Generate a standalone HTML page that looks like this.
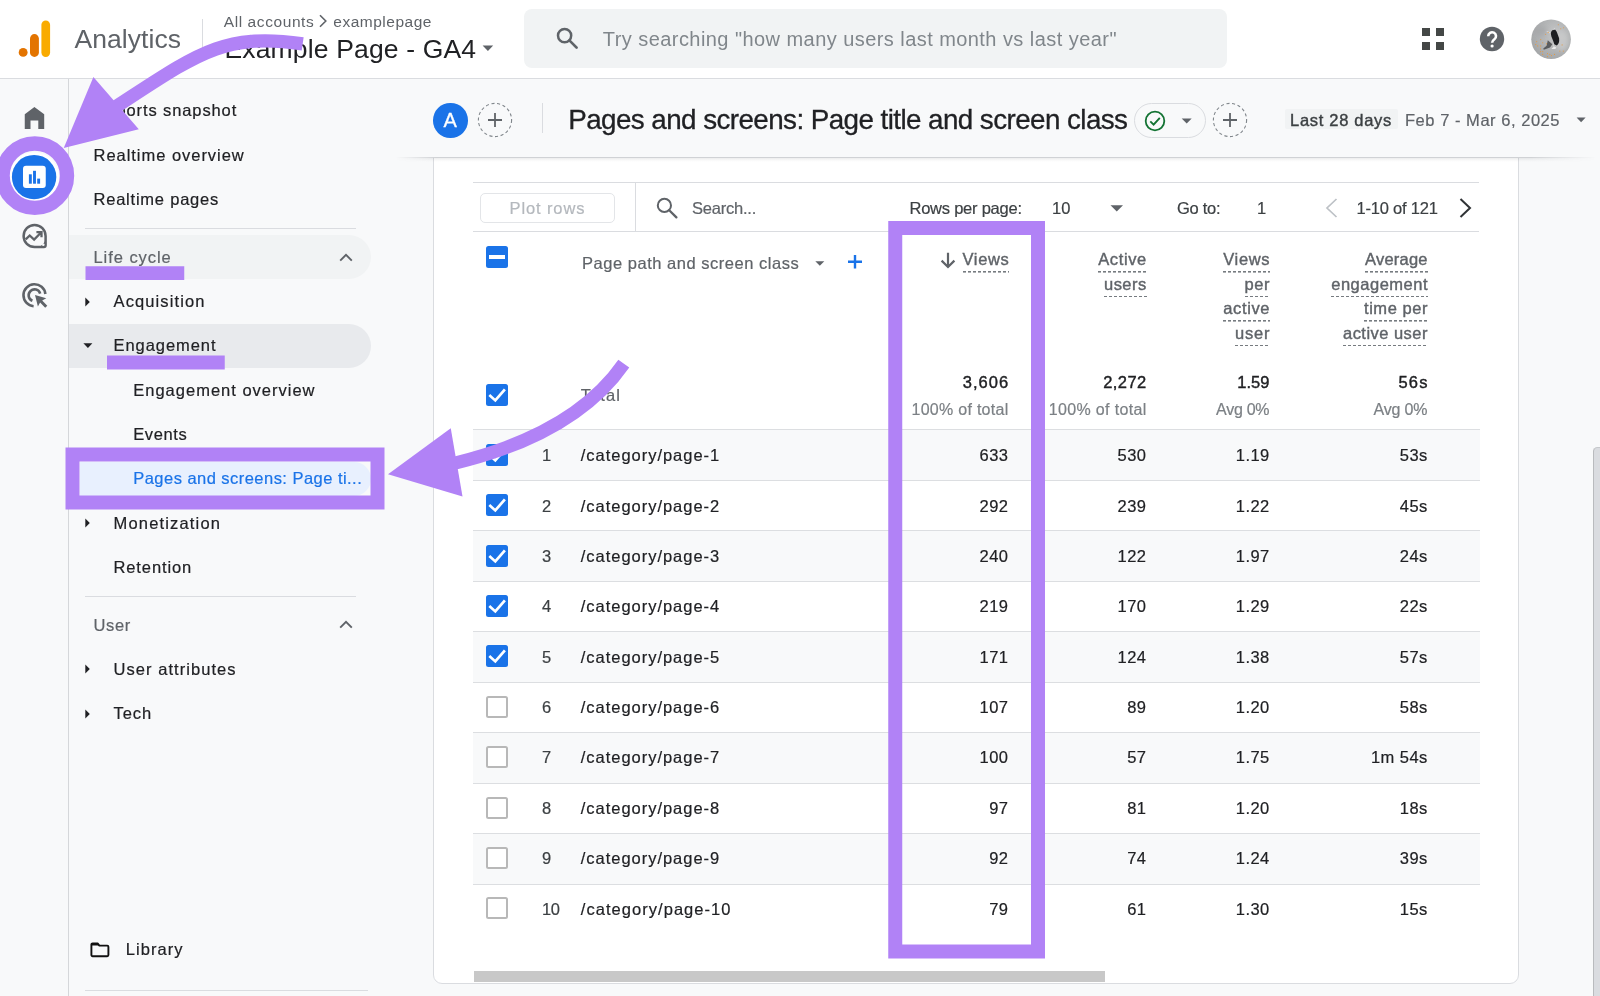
<!DOCTYPE html>
<html lang="en">
<head>
<meta charset="utf-8">
<title>Analytics - Pages and screens</title>
<style>
html,body{margin:0;padding:0}
body{width:1600px;height:996px;overflow:hidden;position:relative;background:#f8f9fa;font-family:"Liberation Sans",Arial,sans-serif;}
.abs,.t,.cb,.row,.ln{position:absolute}
.t{white-space:nowrap;line-height:1;font-family:"Liberation Sans",Arial,sans-serif;-webkit-text-stroke:0.2px currentColor}
.u{padding-bottom:5.1px;background:repeating-linear-gradient(90deg,#767b80 0,#767b80 3.3px,transparent 3.3px,transparent 5px) left bottom/100% 1.6px no-repeat}
.m{-webkit-text-stroke:0.4px currentColor}
.g{-webkit-text-stroke:0.3px currentColor}
.n{-webkit-text-stroke:0}
.layer{position:absolute;left:0;top:0;width:1600px;height:996px;will-change:transform}
svg{position:absolute;overflow:visible}
/* top bar */
#topbar{left:0;top:0;width:1600px;height:78px;background:#fff;border-bottom:1px solid #dadce0}
#searchbox{left:523.75px;top:8.75px;width:703px;height:59.25px;border-radius:8px;background:#f1f3f4}
/* rail + nav */
#rail{left:0;top:79px;width:68px;height:917px;background:#f8f9fa;border-right:1px solid #d5d7da}
#navpane{left:69px;top:79px;width:364px;height:917px;background:#f8f9fa}
.pill{left:69px;width:302px;height:44.3px;border-radius:0 22px 22px 0}
.ln{background:#dadce0;height:1px}
/* report header */
#rhead{left:400px;top:79px;width:1200px;height:78px;background:#f8f9fa}
#rheadline{left:396px;top:157px;width:1204px;height:5px;background:linear-gradient(to bottom,#d0d2d5 0,#d0d2d5 1px,rgba(60,64,67,.09) 1px,rgba(60,64,67,.04) 3px,rgba(60,64,67,0) 5px);-webkit-mask-image:linear-gradient(to right,transparent 0,#000 40px,#000 1135px,transparent 1200px);mask-image:linear-gradient(to right,transparent 0,#000 40px,#000 1135px,transparent 1200px)}
/* card */
#card{left:433px;top:150px;width:1085.5px;height:833.5px;box-sizing:border-box;background:#fff;border:1px solid #dadce0;border-radius:0 0 9px 9px}
.row{left:473px;width:1006.5px;height:50.5px;box-sizing:border-box;border-top:1px solid #dcdee1}
.cb{left:486.25px;width:22px;height:22px;box-sizing:border-box;border-radius:2.5px}
.cb.on{background:#1a73e8}
.cb svg{left:0;top:0}
.cb.off{border:2px solid #b8b8b8;background:#fff}
.cb.ind{background:#1a73e8}
.cb.ind::after{content:"";position:absolute;left:3px;top:9.25px;width:16.2px;height:3.25px;background:#fff}
</style>
</head>
<body>

<!-- ======================= TOP BAR ======================= -->
<header class="layer" id="top">
  <div class="abs" id="topbar"></div>
  <!-- GA logo -->
  <svg width="40" height="44" viewBox="16 18 40 44" style="left:16px;top:18px">
    <rect x="41.4" y="20.4" width="8.7" height="36.5" rx="4.35" fill="#f9ab00"/>
    <rect x="30" y="34.1" width="8.9" height="22.8" rx="4.45" fill="#e37400"/>
    <circle cx="23.15" cy="52.4" r="4.45" fill="#e37400"/>
  </svg>
  <div class="abs" style="left:202px;top:19px;width:1px;height:40px;background:#dadce0"></div>
  <!-- breadcrumb chevron -->
  <svg width="10" height="14" viewBox="0 0 10 14" style="left:318.4px;top:14.3px"><path d="M2 1.2 L7.8 7 L2 12.8" fill="none" stroke="#5f6368" stroke-width="1.6"/></svg>
  <!-- property dropdown triangle -->
  <svg width="12" height="8" viewBox="0 0 12 8" style="left:482.3px;top:45.3px"><path d="M0.6 0.4 H11.2 L5.9 5.9 Z" fill="#5f6368"/></svg>
  <div class="abs" id="searchbox"></div>
  <svg width="24" height="24" viewBox="0 0 24 24" style="left:554.7px;top:25.6px"><circle cx="9.6" cy="9.6" r="6.6" fill="none" stroke="#5f6368" stroke-width="2.5"/><path d="M14.4 14.4 L21.6 21.6" stroke="#5f6368" stroke-width="2.7" stroke-linecap="round"/></svg>
  <!-- apps grid -->
  <svg width="24" height="24" viewBox="0 0 24 24" style="left:1420.5px;top:27px">
    <rect x="1" y="1" width="8" height="8" fill="#444746"/><rect x="15" y="1" width="8" height="8" fill="#444746"/>
    <rect x="1" y="15" width="8" height="8" fill="#444746"/><rect x="15" y="15" width="8" height="8" fill="#444746"/>
  </svg>
  <!-- help -->
  <svg width="26" height="26" viewBox="0 0 26 26" style="left:1478.7px;top:26px">
    <circle cx="13" cy="13" r="12.2" fill="#5f6368"/>
    <path d="M9.2 10.2 a3.9 3.9 0 1 1 6.2 3.1 c-1.5 1.1 -2.3 1.7 -2.3 3.4" fill="none" stroke="#fff" stroke-width="2.6"/>
    <circle cx="13.1" cy="20" r="1.6" fill="#fff"/>
  </svg>
  <!-- avatar -->
  <svg width="40" height="40" viewBox="0 0 40 40" style="left:1530.7px;top:18.8px">
    <defs>
      <radialGradient id="av" cx="62%" cy="38%" r="70%"><stop offset="0" stop-color="#c6c7c8"/><stop offset="0.55" stop-color="#b3b5b6"/><stop offset="1" stop-color="#a3a5a7"/></radialGradient>
      <clipPath id="avc"><circle cx="20.1" cy="20.3" r="19.8"/></clipPath>
      <filter id="avb" x="-50%" y="-50%" width="200%" height="200%"><feGaussianBlur stdDeviation="2.2"/></filter>
    </defs>
    <circle cx="20.1" cy="20.3" r="19.8" fill="url(#av)"/>
    <g clip-path="url(#avc)">
      <ellipse cx="31" cy="22" rx="6" ry="10" fill="#c9cacb" opacity=".8" filter="url(#avb)"/>
      <ellipse cx="9" cy="12" rx="7" ry="5" fill="#a4a6a8" opacity=".7" filter="url(#avb)"/>
      <path d="M16.800 21.300 L21.300 25.300 L19 28.500 L12.800 30.800 L12.300 29.600 L15.600 26.800 Z" fill="#4a4c4f" opacity=".85"/>
      <path d="M21.300 11.300 L24.300 10.800 Q25.800 12.300 26.300 14.300 L28.100 19.300 Q28.400 21.800 27.800 23.800 Q27.200 25.700 25.800 26.400 L23.300 25.300 L22.300 22.300 L20.300 17.300 L19.800 14.300 Q20.200 12.300 21.300 11.300 Z" fill="#1c1e21"/>
      <path d="M22.300 23.300 L23.300 27.400 L25.300 28.400 L24.300 29.900 L20.300 29.900 L22.600 27.800 Z" fill="#e9eaea"/>
      <path d="M15.300 12.300 L17.800 12.800 L19.600 14.600 L17.300 13.700 Z M22.600 9.300 L24 9.200 L23.600 10 Z" fill="#eeeeee"/>
      <g fill="#e39a45"><circle cx="27.3" cy="5.8" r="0.55"/><circle cx="29.8" cy="9.8" r="0.55"/><circle cx="32.6" cy="8.8" r="0.55"/><circle cx="9.7" cy="20.6" r="0.55"/><circle cx="5.7" cy="22.6" r="0.55"/><circle cx="11.7" cy="23.8" r="0.55"/><circle cx="15.5" cy="24.8" r="0.55"/><circle cx="9.7" cy="26.9" r="0.55"/><circle cx="4.7" cy="25.6" r="0.55"/><circle cx="6.7" cy="26.9" r="0.55"/><circle cx="9.5" cy="29.9" r="0.55"/><circle cx="11.7" cy="32.6" r="0.55"/><circle cx="9.5" cy="32.6" r="0.55"/><circle cx="11.7" cy="35.4" r="0.55"/><circle cx="16.5" cy="34.6" r="0.55"/><circle cx="18.8" cy="35.4" r="0.55"/><circle cx="16.5" cy="37.6" r="0.55"/><circle cx="23.5" cy="35.4" r="0.55"/><circle cx="20.5" cy="36.6" r="0.55"/><circle cx="31.1" cy="25.9" r="0.55"/><circle cx="28.8" cy="32.1" r="0.55"/><circle cx="32.3" cy="32.1" r="0.55"/><circle cx="14.6" cy="15.3" r="0.55"/><circle cx="17.2" cy="13.4" r="0.55"/></g>
    </g>
  </svg>
<span class="t n" id="t0" style="top:25.57px;font-size:26.5px;color:#5f6368;left:74.50px;letter-spacing:0.057px;">Analytics</span>
<span class="t n" id="t1" style="top:13.63px;font-size:15.5px;color:#5f6368;left:223.75px;letter-spacing:0.584px;">All accounts</span>
<span class="t n" id="t2" style="top:13.63px;font-size:15.5px;color:#5f6368;left:333.25px;letter-spacing:0.517px;">examplepage</span>
<span class="t n" id="t3" style="top:35.57px;font-size:26.5px;color:#202124;left:224.50px;letter-spacing:0.151px;">Example Page - GA4</span>
<span class="t n" id="t4" style="top:28.82px;font-size:20px;color:#80868b;left:602.75px;letter-spacing:0.442px;">Try searching "how many users last month vs last year"</span>
</header>

<!-- ======================= LEFT RAIL ======================= -->
<aside class="layer" id="railwrap">
  <div class="abs" id="rail"></div>
  <!-- rail icons: home, reports (active), explore, advertising -->
  <svg width="68" height="260" viewBox="0 90 68 260" style="left:0;top:90px">
    <path d="M24.760 129 V114.300 L34.400 107.050 L44.200 114.300 V129 H38.300 V120.600 H30.500 V129 Z" fill="#5f6368"/>
    <circle cx="34.100" cy="177.100" r="24.900" fill="#fff"/>
    <circle cx="34.100" cy="177.100" r="22.200" fill="#1a73e8"/>
    <rect x="23" y="165.750" width="22.750" height="22.300" rx="3" fill="#fff"/>
    <rect x="28.900" y="174.300" width="2.900" height="9.400" fill="#1a73e8"/>
    <rect x="33.050" y="170.800" width="2.900" height="12.900" fill="#1a73e8"/>
    <rect x="37.200" y="178.600" width="2.900" height="5.100" fill="#1a73e8"/>
    <path d="M34.600 225 a11 11 0 1 0 0 22 h9.300 a1.700 1.700 0 0 0 1.700 -1.700 v-9.300 a11 11 0 0 0 -11 -11 z" fill="none" stroke="#5f6368" stroke-width="2.500"/>
    <path d="M45.600 239.500 V245.300 a1.700 1.700 0 0 1 -1.700 1.700 H38.100 A11 11 0 0 0 45.600 239.500z" fill="#5f6368"/>
    <path d="M25.700 239.300 L29.700 235.500 L34.100 239.600 L40.600 233 M36.400 232.200 H41.500 V237.300" fill="none" stroke="#5f6368" stroke-width="2.300" stroke-linejoin="miter"/>
    <circle cx="43.300" cy="244.800" r="1.300" fill="#f8f9fa"/>
    <path d="M33.600 306.200 A11 11 0 1 1 45.400 294" fill="none" stroke="#5f6368" stroke-width="2.600"/>
    <path d="M32.400 300.800 A5.900 5.900 0 1 1 40.200 293.600" fill="none" stroke="#5f6368" stroke-width="2.600"/>
    <path d="M35 295 L46.300 298.300 L42.200 300.600 L47.300 305.700 L45.200 307.700 L40.100 302.600 L37.900 306.600 Z" fill="#5f6368"/>
  </svg>
</aside>

<!-- ======================= NAV ======================= -->
<nav class="layer" id="nav">
  <div class="abs" id="navpane"></div>
  <div class="ln" style="left:84.500px;top:227.700px;width:271.500px"></div>
  <div class="abs pill" style="top:235.200px;background:#f1f3f4"></div>
  <div class="abs pill" style="top:323.700px;background:#e8eaed"></div>
  <div class="abs" style="left:79.500px;top:461.500px;width:291.500px;height:34px;background:#e8f0fe;border-radius:0 17px 17px 0"></div>
  <div class="ln" style="left:84.500px;top:596px;width:271.500px"></div>
  <div class="ln" style="left:85px;top:990px;width:283px"></div>
  <!-- chevrons -->
  <svg width="14" height="9" viewBox="0 0 14 9" style="left:339px;top:252.800px"><path d="M1.200 7.600 L7 1.800 L12.800 7.600" fill="none" stroke="#5f6368" stroke-width="1.900"/></svg>
  <svg width="14" height="9" viewBox="0 0 14 9" style="left:339px;top:620.300px"><path d="M1.200 7.600 L7 1.800 L12.800 7.600" fill="none" stroke="#5f6368" stroke-width="1.900"/></svg>
  <!-- tree triangles -->
  <svg width="6" height="10" viewBox="0 0 6 10" style="left:85.300px;top:296.500px"><path d="M0.300 0.600 L4.800 5 L0.300 9.400Z" fill="#202124"/></svg>
  <svg width="10" height="6" viewBox="0 0 10 6" style="left:82.600px;top:343.400px"><path d="M0.400 0.300 H9.400 L4.900 4.900Z" fill="#202124"/></svg>
  <svg width="6" height="10" viewBox="0 0 6 10" style="left:85.300px;top:518px"><path d="M0.300 0.600 L4.800 5 L0.300 9.400Z" fill="#202124"/></svg>
  <svg width="6" height="10" viewBox="0 0 6 10" style="left:85.300px;top:664.300px"><path d="M0.300 0.600 L4.800 5 L0.300 9.400Z" fill="#202124"/></svg>
  <svg width="6" height="10" viewBox="0 0 6 10" style="left:85.300px;top:708.600px"><path d="M0.300 0.600 L4.800 5 L0.300 9.400Z" fill="#202124"/></svg>
  <!-- library folder -->
  <svg width="20" height="16" viewBox="0 0 20 16" style="left:90px;top:941.800px"><path d="M1.400 3 V13 a1.200 1.200 0 0 0 1.200 1.200 H17.200 a1.200 1.200 0 0 0 1.200 -1.200 V4.800 a1.200 1.200 0 0 0 -1.200 -1.200 H9.400 L7.600 1.400 H2.600 A1.200 1.200 0 0 0 1.400 2.600 Z" fill="none" stroke="#111" stroke-width="1.900" stroke-linejoin="round"/><path d="M1.400 1.400 H7.600 L9.400 3.600 H1.400Z" fill="#111"/></svg>
<span class="t" id="t9" style="top:102.28px;font-size:16.5px;color:#202124;left:93.50px;letter-spacing:0.895px;">Reports snapshot</span>
<span class="t" id="t10" style="top:146.53px;font-size:16.5px;color:#202124;left:93.50px;letter-spacing:0.966px;">Realtime overview</span>
<span class="t" id="t11" style="top:191.03px;font-size:16.5px;color:#202124;left:93.50px;letter-spacing:0.776px;">Realtime pages</span>
<span class="t" id="t12" style="top:249.28px;font-size:16.5px;color:#5f6368;left:93.50px;letter-spacing:0.941px;">Life cycle</span>
<span class="t" id="t13" style="top:293.03px;font-size:16.5px;color:#202124;left:113.50px;letter-spacing:1.120px;">Acquisition</span>
<span class="t" id="t14" style="top:337.28px;font-size:16.5px;color:#202124;left:113.50px;letter-spacing:0.936px;">Engagement</span>
<span class="t" id="t15" style="top:381.78px;font-size:16.5px;color:#202124;left:133.25px;letter-spacing:0.999px;">Engagement overview</span>
<span class="t" id="t16" style="top:426.03px;font-size:16.5px;color:#202124;left:133.25px;letter-spacing:0.609px;">Events</span>
<span class="t" id="t17" style="top:470.28px;font-size:16.5px;color:#1a73e8;left:133.25px;letter-spacing:0.462px;">Pages and screens: Page ti...</span>
<span class="t" id="t18" style="top:514.78px;font-size:16.5px;color:#202124;left:113.50px;letter-spacing:1.176px;">Monetization</span>
<span class="t" id="t19" style="top:559.03px;font-size:16.5px;color:#202124;left:113.50px;letter-spacing:0.889px;">Retention</span>
<span class="t" id="t20" style="top:616.78px;font-size:16.5px;color:#5f6368;left:93.50px;letter-spacing:0.635px;">User</span>
<span class="t" id="t21" style="top:661.03px;font-size:16.5px;color:#202124;left:113.50px;letter-spacing:1.050px;">User attributes</span>
<span class="t" id="t22" style="top:705.28px;font-size:16.5px;color:#202124;left:113.50px;letter-spacing:0.947px;">Tech</span>
<span class="t" id="t23" style="top:941.28px;font-size:16.5px;color:#202124;left:125.75px;letter-spacing:1.052px;">Library</span>
</nav>

<!-- ======================= MAIN ======================= -->
<main class="layer" id="main">
  <section class="abs" id="card"></section>
  <div class="abs" id="rhead"></div>
  <div class="abs" id="rheadline"></div>

  <!-- header controls -->
  <div class="abs" style="left:433.200px;top:103px;width:34.500px;height:34.500px;border-radius:50%;background:#1a73e8"></div>
  <svg width="36" height="36" viewBox="0 0 36 36" style="left:476.600px;top:102.250px"><circle cx="18" cy="18" r="16.600" fill="none" stroke="#80868b" stroke-width="1.100" stroke-dasharray="3.100 2.600"/><path d="M18 11 V25 M11 18 H25" stroke="#5f6368" stroke-width="1.800"/></svg>
  <div class="abs" style="left:542px;top:103px;width:1px;height:29.500px;background:#dadce0"></div>
  <div class="abs" style="left:1134.200px;top:103px;width:72px;height:34.500px;box-sizing:border-box;border:1px solid #dadce0;border-radius:17.500px"></div>
  <svg width="22" height="22" viewBox="0 0 22 22" style="left:1143.750px;top:109.750px"><circle cx="11" cy="11" r="9.300" fill="none" stroke="#137333" stroke-width="1.800"/><path d="M6.300 11.400 L9.600 14.600 L15.800 7.800" fill="none" stroke="#137333" stroke-width="1.900"/></svg>
  <svg width="12" height="7" viewBox="0 0 12 7" style="left:1181px;top:118.200px"><path d="M0.700 0.400 H10.700 L5.700 5.400Z" fill="#5f6368"/></svg>
  <svg width="36" height="36" viewBox="0 0 36 36" style="left:1211.600px;top:102.250px"><circle cx="18" cy="18" r="16.600" fill="none" stroke="#80868b" stroke-width="1.100" stroke-dasharray="3.100 2.600"/><path d="M18 11 V25 M11 18 H25" stroke="#5f6368" stroke-width="1.800"/></svg>
  <div class="abs" style="left:1285px;top:109.250px;width:112.500px;height:20px;background:#f1f3f4;border-radius:2px"></div>
  <svg width="11" height="7" viewBox="0 0 11 7" style="left:1576.200px;top:117px"><path d="M0.600 0.400 H9.600 L5.100 5.200Z" fill="#5f6368"/></svg>
<span class="t g" id="t5" style="top:110.32px;font-size:20px;color:#ffffff;left:443.40px;">A</span>
<span class="t g" id="t6" style="top:106.47px;font-size:27.8px;color:#202124;left:568.25px;letter-spacing:-0.575px;">Pages and screens: Page title and screen class</span>
<span class="t m" id="t7" style="top:111.53px;font-size:16.5px;color:#3c4043;left:1290.00px;letter-spacing:0.699px;">Last 28 days</span>
<span class="t" id="t8" style="top:111.53px;font-size:16.5px;color:#5f6368;left:1405.00px;letter-spacing:0.532px;">Feb 7 - Mar 6, 2025</span>

  <!-- toolbar -->
  <div class="ln" style="left:472.500px;top:181.750px;width:1006.800px"></div>
  <div class="ln" style="left:472.500px;top:231.250px;width:1006.800px"></div>
  <div class="abs" style="left:635px;top:182px;width:1px;height:49.500px;background:#dadce0"></div>
  <div class="abs" style="left:480px;top:193px;width:134.6px;height:29.6px;box-sizing:border-box;border:1px solid #e3e5e8;border-radius:5px;background:#fff"></div>
  <svg width="24" height="24" viewBox="0 0 24 24" style="left:655px;top:195.6px"><circle cx="9.400" cy="9.400" r="6.600" fill="none" stroke="#5f6368" stroke-width="2"/><path d="M14.200 14.200 L21.400 21.400" stroke="#5f6368" stroke-width="2.300" stroke-linecap="round"/></svg>
  <svg width="14" height="8" viewBox="0 0 14 8" style="left:1110px;top:205.200px"><path d="M0.500 0.300 H13 L6.750 6.600Z" fill="#5f6368"/></svg>
  <svg width="13" height="20" viewBox="0 0 13 20" style="left:1325px;top:198px"><path d="M11.500 1 L2 10 L11.500 19" fill="none" stroke="#bdc1c6" stroke-width="1.700"/></svg>
  <svg width="13" height="20" viewBox="0 0 13 20" style="left:1458.500px;top:198px"><path d="M1.500 1 L11 10 L1.500 19" fill="none" stroke="#303336" stroke-width="2"/></svg>
<span class="t" id="t24" style="top:199.78px;font-size:16.5px;color:#b4b8bd;left:509.50px;letter-spacing:0.893px;">Plot rows</span>
<span class="t" id="t25" style="top:199.78px;font-size:16.5px;color:#5f6368;left:692.00px;letter-spacing:-0.225px;">Search...</span>
<span class="t" id="t26" style="top:199.78px;font-size:16.5px;color:#3c4043;left:909.50px;letter-spacing:-0.237px;">Rows per page:</span>
<span class="t" id="t27" style="top:199.78px;font-size:16.5px;color:#3c4043;left:1052.00px;letter-spacing:0.141px;">10</span>
<span class="t" id="t28" style="top:199.78px;font-size:16.5px;color:#3c4043;left:1177.00px;letter-spacing:-0.291px;">Go to:</span>
<span class="t" id="t29" style="top:199.78px;font-size:16.5px;color:#3c4043;left:1257.00px;">1</span>
<span class="t" id="t30" style="top:199.78px;font-size:16.5px;color:#3c4043;left:1356.50px;letter-spacing:-0.198px;">1-10 of 121</span>

  <!-- column headers -->
  <i class="cb ind" style="top:246px"></i>
  <svg width="10" height="6" viewBox="0 0 10 6" style="left:815.300px;top:260.800px"><path d="M0.300 0.300 H9.300 L4.800 4.800Z" fill="#5f6368"/></svg>
  <svg width="16" height="16" viewBox="0 0 16 16" style="left:847.1px;top:253.8px"><path d="M8 1 V14.600 M1 7.800 H15" stroke="#1a73e8" stroke-width="2.400"/></svg>
  <svg width="16" height="17" viewBox="0 0 16 17" style="left:939.750px;top:252px"><path d="M8 0.800 V14.800 M1.600 8.600 L8 15 L14.400 8.600" fill="none" stroke="#5f6368" stroke-width="2.200"/></svg>
<span class="t" id="t31" style="top:255.28px;font-size:16.5px;color:#5f6368;left:582.00px;letter-spacing:0.522px;">Page path and screen class</span>
<span class="t u m" id="t32" style="top:251.03px;font-size:16.5px;color:#5f6368;left:962.50px;letter-spacing:0.633px;">Views</span>
<span class="t u m" id="t33" style="top:251.03px;font-size:16.5px;color:#5f6368;left:1098.25px;letter-spacing:0.613px;">Active</span>
<span class="t u m" id="t34" style="top:275.78px;font-size:16.5px;color:#5f6368;left:1104.00px;letter-spacing:0.473px;">users</span>
<span class="t u m" id="t35" style="top:251.03px;font-size:16.5px;color:#5f6368;left:1223.25px;letter-spacing:0.633px;">Views</span>
<span class="t u m" id="t36" style="top:275.78px;font-size:16.5px;color:#5f6368;left:1244.50px;letter-spacing:0.570px;">per</span>
<span class="t u m" id="t37" style="top:300.28px;font-size:16.5px;color:#5f6368;left:1223.25px;letter-spacing:0.628px;">active</span>
<span class="t u m" id="t38" style="top:324.78px;font-size:16.5px;color:#5f6368;left:1235.00px;letter-spacing:0.797px;">user</span>
<span class="t u m" id="t39" style="top:251.03px;font-size:16.5px;color:#5f6368;left:1365.00px;letter-spacing:0.221px;">Average</span>
<span class="t u m" id="t40" style="top:275.78px;font-size:16.5px;color:#5f6368;left:1331.25px;letter-spacing:0.500px;">engagement</span>
<span class="t u m" id="t41" style="top:300.28px;font-size:16.5px;color:#5f6368;left:1364.00px;letter-spacing:0.556px;">time per</span>
<span class="t u m" id="t42" style="top:324.78px;font-size:16.5px;color:#5f6368;left:1343.00px;letter-spacing:0.470px;">active user</span>

  <!-- totals -->
  <i class="cb on" style="top:384px"><svg width="22" height="22" viewBox="0 0 22 22"><path d="M3.3 11.1 L9.3 16.4 L18.9 5.3" fill="none" stroke="#fff" stroke-width="2.7"/></svg></i>
<span class="t" id="t43" style="top:386.78px;font-size:16.5px;color:#5f6368;left:580.75px;letter-spacing:1.098px;">Total</span>
<span class="t m" id="t44" style="top:374.28px;font-size:16.5px;color:#202124;left:962.75px;letter-spacing:1.051px;">3,606</span>
<span class="t" id="t45" style="top:402.21px;font-size:16px;color:#7c8085;left:911.50px;letter-spacing:0.279px;">100% of total</span>
<span class="t m" id="t46" style="top:374.28px;font-size:16.5px;color:#202124;left:1103.25px;letter-spacing:0.426px;">2,272</span>
<span class="t" id="t47" style="top:402.21px;font-size:16px;color:#7c8085;left:1048.75px;letter-spacing:0.341px;">100% of total</span>
<span class="t m" id="t48" style="top:374.28px;font-size:16.5px;color:#202124;left:1237.30px;letter-spacing:0.025px;">1.59</span>
<span class="t" id="t49" style="top:402.21px;font-size:16px;color:#7c8085;left:1216.10px;letter-spacing:-0.292px;">Avg 0%</span>
<span class="t m" id="t50" style="top:374.28px;font-size:16.5px;color:#202124;left:1398.40px;letter-spacing:1.245px;">56s</span>
<span class="t" id="t51" style="top:402.21px;font-size:16px;color:#7c8085;left:1373.60px;letter-spacing:-0.192px;">Avg 0%</span>

  <!-- data rows -->
<div class="row" style="top:429.00px;background:#f8f9fa"></div>
<i class="cb on" style="top:444.00px"><svg width="22" height="22" viewBox="0 0 22 22"><path d="M3.3 11.1 L9.3 16.4 L18.9 5.3" fill="none" stroke="#fff" stroke-width="2.7"/></svg></i>
<span class="t" id="t52" style="top:447.28px;font-size:16.5px;color:#3c4043;left:542.00px;">1</span>
<span class="t" id="t53" style="top:447.28px;font-size:16.5px;color:#202124;left:580.75px;letter-spacing:0.974px;">/category/page-1</span>
<span class="t" id="t54" style="top:447.28px;font-size:16.5px;color:#202124;right:591.50px;letter-spacing:0.45px;">633</span>
<span class="t" id="t55" style="top:447.28px;font-size:16.5px;color:#202124;right:453.50px;letter-spacing:0.45px;">530</span>
<span class="t" id="t56" style="top:447.28px;font-size:16.5px;color:#202124;right:330.25px;letter-spacing:0.45px;">1.19</span>
<span class="t" id="t57" style="top:447.28px;font-size:16.5px;color:#202124;right:172.25px;letter-spacing:0.45px;">53s</span>
<div class="row" style="top:479.50px;background:#ffffff"></div>
<i class="cb on" style="top:494.36px"><svg width="22" height="22" viewBox="0 0 22 22"><path d="M3.3 11.1 L9.3 16.4 L18.9 5.3" fill="none" stroke="#fff" stroke-width="2.7"/></svg></i>
<span class="t" id="t58" style="top:497.64px;font-size:16.5px;color:#3c4043;left:542.00px;">2</span>
<span class="t" id="t59" style="top:497.64px;font-size:16.5px;color:#202124;left:580.75px;letter-spacing:0.974px;">/category/page-2</span>
<span class="t" id="t60" style="top:497.64px;font-size:16.5px;color:#202124;right:591.50px;letter-spacing:0.45px;">292</span>
<span class="t" id="t61" style="top:497.64px;font-size:16.5px;color:#202124;right:453.50px;letter-spacing:0.45px;">239</span>
<span class="t" id="t62" style="top:497.64px;font-size:16.5px;color:#202124;right:330.25px;letter-spacing:0.45px;">1.22</span>
<span class="t" id="t63" style="top:497.64px;font-size:16.5px;color:#202124;right:172.25px;letter-spacing:0.45px;">45s</span>
<div class="row" style="top:530.00px;background:#f8f9fa"></div>
<i class="cb on" style="top:544.72px"><svg width="22" height="22" viewBox="0 0 22 22"><path d="M3.3 11.1 L9.3 16.4 L18.9 5.3" fill="none" stroke="#fff" stroke-width="2.7"/></svg></i>
<span class="t" id="t64" style="top:548.00px;font-size:16.5px;color:#3c4043;left:542.00px;">3</span>
<span class="t" id="t65" style="top:548.00px;font-size:16.5px;color:#202124;left:580.75px;letter-spacing:0.974px;">/category/page-3</span>
<span class="t" id="t66" style="top:548.00px;font-size:16.5px;color:#202124;right:591.50px;letter-spacing:0.45px;">240</span>
<span class="t" id="t67" style="top:548.00px;font-size:16.5px;color:#202124;right:453.50px;letter-spacing:0.45px;">122</span>
<span class="t" id="t68" style="top:548.00px;font-size:16.5px;color:#202124;right:330.25px;letter-spacing:0.45px;">1.97</span>
<span class="t" id="t69" style="top:548.00px;font-size:16.5px;color:#202124;right:172.25px;letter-spacing:0.45px;">24s</span>
<div class="row" style="top:580.50px;background:#ffffff"></div>
<i class="cb on" style="top:595.08px"><svg width="22" height="22" viewBox="0 0 22 22"><path d="M3.3 11.1 L9.3 16.4 L18.9 5.3" fill="none" stroke="#fff" stroke-width="2.7"/></svg></i>
<span class="t" id="t70" style="top:598.36px;font-size:16.5px;color:#3c4043;left:542.00px;">4</span>
<span class="t" id="t71" style="top:598.36px;font-size:16.5px;color:#202124;left:580.75px;letter-spacing:0.974px;">/category/page-4</span>
<span class="t" id="t72" style="top:598.36px;font-size:16.5px;color:#202124;right:591.50px;letter-spacing:0.45px;">219</span>
<span class="t" id="t73" style="top:598.36px;font-size:16.5px;color:#202124;right:453.50px;letter-spacing:0.45px;">170</span>
<span class="t" id="t74" style="top:598.36px;font-size:16.5px;color:#202124;right:330.25px;letter-spacing:0.45px;">1.29</span>
<span class="t" id="t75" style="top:598.36px;font-size:16.5px;color:#202124;right:172.25px;letter-spacing:0.45px;">22s</span>
<div class="row" style="top:631.00px;background:#f8f9fa"></div>
<i class="cb on" style="top:645.44px"><svg width="22" height="22" viewBox="0 0 22 22"><path d="M3.3 11.1 L9.3 16.4 L18.9 5.3" fill="none" stroke="#fff" stroke-width="2.7"/></svg></i>
<span class="t" id="t76" style="top:648.72px;font-size:16.5px;color:#3c4043;left:542.00px;">5</span>
<span class="t" id="t77" style="top:648.72px;font-size:16.5px;color:#202124;left:580.75px;letter-spacing:0.974px;">/category/page-5</span>
<span class="t" id="t78" style="top:648.72px;font-size:16.5px;color:#202124;right:591.50px;letter-spacing:0.45px;">171</span>
<span class="t" id="t79" style="top:648.72px;font-size:16.5px;color:#202124;right:453.50px;letter-spacing:0.45px;">124</span>
<span class="t" id="t80" style="top:648.72px;font-size:16.5px;color:#202124;right:330.25px;letter-spacing:0.45px;">1.38</span>
<span class="t" id="t81" style="top:648.72px;font-size:16.5px;color:#202124;right:172.25px;letter-spacing:0.45px;">57s</span>
<div class="row" style="top:681.50px;background:#ffffff"></div>
<i class="cb off" style="top:695.80px"></i>
<span class="t" id="t82" style="top:699.08px;font-size:16.5px;color:#3c4043;left:542.00px;">6</span>
<span class="t" id="t83" style="top:699.08px;font-size:16.5px;color:#202124;left:580.75px;letter-spacing:0.974px;">/category/page-6</span>
<span class="t" id="t84" style="top:699.08px;font-size:16.5px;color:#202124;right:591.50px;letter-spacing:0.45px;">107</span>
<span class="t" id="t85" style="top:699.08px;font-size:16.5px;color:#202124;right:453.50px;letter-spacing:0.45px;">89</span>
<span class="t" id="t86" style="top:699.08px;font-size:16.5px;color:#202124;right:330.25px;letter-spacing:0.45px;">1.20</span>
<span class="t" id="t87" style="top:699.08px;font-size:16.5px;color:#202124;right:172.25px;letter-spacing:0.45px;">58s</span>
<div class="row" style="top:732.00px;background:#f8f9fa"></div>
<i class="cb off" style="top:746.16px"></i>
<span class="t" id="t88" style="top:749.44px;font-size:16.5px;color:#3c4043;left:542.00px;">7</span>
<span class="t" id="t89" style="top:749.44px;font-size:16.5px;color:#202124;left:580.75px;letter-spacing:0.974px;">/category/page-7</span>
<span class="t" id="t90" style="top:749.44px;font-size:16.5px;color:#202124;right:591.50px;letter-spacing:0.45px;">100</span>
<span class="t" id="t91" style="top:749.44px;font-size:16.5px;color:#202124;right:453.50px;letter-spacing:0.45px;">57</span>
<span class="t" id="t92" style="top:749.44px;font-size:16.5px;color:#202124;right:330.25px;letter-spacing:0.45px;">1.75</span>
<span class="t" id="t93" style="top:749.44px;font-size:16.5px;color:#202124;right:172.25px;letter-spacing:0.45px;">1m 54s</span>
<div class="row" style="top:782.50px;background:#ffffff"></div>
<i class="cb off" style="top:796.52px"></i>
<span class="t" id="t94" style="top:799.80px;font-size:16.5px;color:#3c4043;left:542.00px;">8</span>
<span class="t" id="t95" style="top:799.80px;font-size:16.5px;color:#202124;left:580.75px;letter-spacing:0.974px;">/category/page-8</span>
<span class="t" id="t96" style="top:799.80px;font-size:16.5px;color:#202124;right:591.50px;letter-spacing:0.45px;">97</span>
<span class="t" id="t97" style="top:799.80px;font-size:16.5px;color:#202124;right:453.50px;letter-spacing:0.45px;">81</span>
<span class="t" id="t98" style="top:799.80px;font-size:16.5px;color:#202124;right:330.25px;letter-spacing:0.45px;">1.20</span>
<span class="t" id="t99" style="top:799.80px;font-size:16.5px;color:#202124;right:172.25px;letter-spacing:0.45px;">18s</span>
<div class="row" style="top:833.00px;background:#f8f9fa"></div>
<i class="cb off" style="top:846.88px"></i>
<span class="t" id="t100" style="top:850.16px;font-size:16.5px;color:#3c4043;left:542.00px;">9</span>
<span class="t" id="t101" style="top:850.16px;font-size:16.5px;color:#202124;left:580.75px;letter-spacing:0.974px;">/category/page-9</span>
<span class="t" id="t102" style="top:850.16px;font-size:16.5px;color:#202124;right:591.50px;letter-spacing:0.45px;">92</span>
<span class="t" id="t103" style="top:850.16px;font-size:16.5px;color:#202124;right:453.50px;letter-spacing:0.45px;">74</span>
<span class="t" id="t104" style="top:850.16px;font-size:16.5px;color:#202124;right:330.25px;letter-spacing:0.45px;">1.24</span>
<span class="t" id="t105" style="top:850.16px;font-size:16.5px;color:#202124;right:172.25px;letter-spacing:0.45px;">39s</span>
<div class="row" style="top:883.50px;background:#ffffff"></div>
<i class="cb off" style="top:897.24px"></i>
<span class="t" id="t106" style="top:900.52px;font-size:16.5px;color:#3c4043;left:542.00px;letter-spacing:-0.359px;">10</span>
<span class="t" id="t107" style="top:900.52px;font-size:16.5px;color:#202124;left:580.75px;letter-spacing:1.046px;">/category/page-10</span>
<span class="t" id="t108" style="top:900.52px;font-size:16.5px;color:#202124;right:591.50px;letter-spacing:0.45px;">79</span>
<span class="t" id="t109" style="top:900.52px;font-size:16.5px;color:#202124;right:453.50px;letter-spacing:0.45px;">61</span>
<span class="t" id="t110" style="top:900.52px;font-size:16.5px;color:#202124;right:330.25px;letter-spacing:0.45px;">1.30</span>
<span class="t" id="t111" style="top:900.52px;font-size:16.5px;color:#202124;right:172.25px;letter-spacing:0.45px;">15s</span>

  <!-- horizontal scrollbar -->
  <div class="abs" style="left:474px;top:971.250px;width:630.500px;height:10.800px;background:#c8c8c8"></div>
  <!-- page scrollbar -->
  <div class="abs" style="left:1592.5px;top:446.5px;width:12px;height:560px;background:#dadce0;border-left:1px solid #b9bbbe;border-top:1px solid #c6c8cb;border-radius:4.5px 0 0 0;box-sizing:border-box"></div>
</main>

<!-- ======================= ANNOTATIONS ======================= -->
<svg class="layer" id="annot" width="1600" height="996" viewBox="0 0 1600 996" style="left:0;top:0">
  <g fill="none" stroke="#b182f6">
    <circle cx="34.800" cy="175.700" r="32.200" stroke-width="14.400"/>
    <rect x="72.500" y="454.500" width="305" height="48" stroke-width="14"/>
    <rect x="895.250" y="228" width="142.750" height="723.500" stroke-width="14"/>
    <path d="M302.7 43.8 C223.5 32.5 198.2 53.3 116.5 106.4" stroke-width="13.4"/>
    <path d="M623.8 363.6 Q575.1 433.8 455 463.1" stroke-width="13.3"/>
  </g>
  <g fill="#b182f6">
    <rect x="85.500" y="266.250" width="98.750" height="13.750"/>
    <rect x="107" y="355.500" width="117.750" height="14"/>
    <path d="M93.4 77.1 L138.8 129.3 L63.75 148 Z"/>
    <path d="M450.750 428.250 L462.500 496.500 L388 474.300 Z"/>
  </g>
</svg>

</body>
</html>
